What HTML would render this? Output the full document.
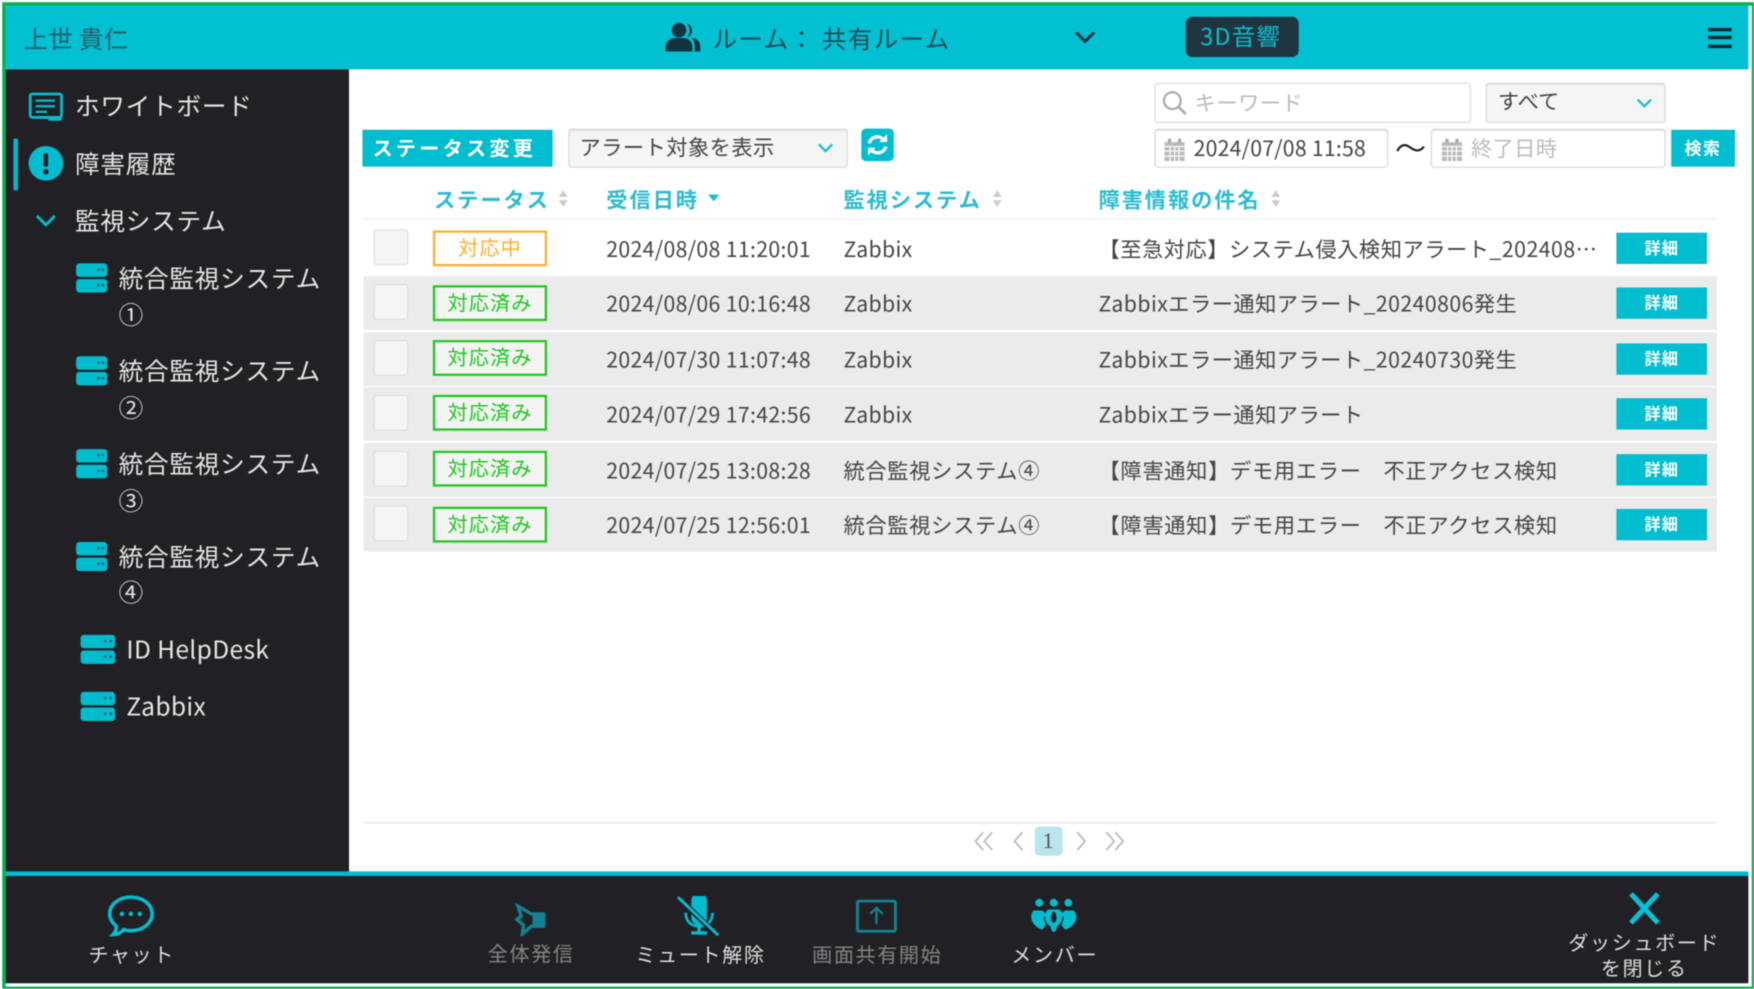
<!DOCTYPE html>
<html lang="ja"><head><meta charset="utf-8"><title>障害履歴</title>
<style>
html,body{margin:0;padding:0;background:#fff;width:1754px;height:989px;overflow:hidden}
#r{position:absolute;left:0;top:0;width:1568px;height:884px;transform:scale(1.11862);transform-origin:0 0;background:#fff;overflow:hidden;filter:blur(.45px);font-family:"Noto Sans CJK JP","Liberation Sans",sans-serif}
#r div,#r svg{position:absolute}
.t{white-space:nowrap;transform:translateY(-50%);line-height:1.2}
.b{background:#f5f5f5;border:1px solid #d8d8d8;border-radius:3px;box-sizing:border-box;box-shadow:inset 0 1px 1px #ddd}
.s{font-size:22px;color:#e6e6e6;letter-spacing:.7px;margin-top:-.6px}
.h{font-size:19px;color:#2bbccf;font-weight:700;letter-spacing:1.7px;margin-top:1px}
.c{font-size:19px;color:#444;letter-spacing:.3px;margin-top:1px}
.g{background:#ebebeb}
.tag{width:102px;height:32px;box-sizing:border-box;border:2px solid #1cc81c;color:#1cc81c;text-align:center;font-size:18px;letter-spacing:1px;line-height:26px;background:#f4f4f4}
.d{left:1445px;width:81px;height:28px;background:#00bdd0;color:#fff;text-align:center;font-size:14.5px;line-height:28px;font-weight:700;letter-spacing:1px}
.cb{left:334px;width:31px;height:32px;background:#f5f5f5;border:1px solid #ddd;border-radius:3px;box-sizing:border-box}
.f{font-size:18px;letter-spacing:1.4px;color:#ddd}
.f2{color:#858585}
</style></head><body><div id="r">
<!-- frame -->
<div style="left:5px;top:5px;width:1558px;height:57px;background:#00c0d2"></div>
<div style="left:5px;top:62px;width:307px;height:718px;background:#212025"></div>
<div style="left:5px;top:779px;width:1558px;height:4px;background:#00bccf"></div>
<div style="left:5px;top:783px;width:1558px;height:96px;background:#212025"></div>
<div style="left:2px;top:1.5px;width:1561px;height:877.5px;border:3.5px solid #00b050;box-sizing:content-box"></div>

<!-- header -->
<div class="t" style="left:21px;top:34px;font-size:22px;color:#24606c;letter-spacing:.2px">上世 貴仁</div>
<svg style="left:594px;top:19px" width="33" height="28" viewBox="0 0 33 28"><g fill="#123440"><circle cx="13" cy="8" r="6.500"/><path d="M20 2a6.500 6.500 0 0 1 0 12.500 9 9 0 0 0 0-12.500z"/><path d="M1 27v-4c0-5 4-8 8-8h8c4 0 8 3 8 8v4z"/><path d="M24 15c5 0 8 3 8 8v4h-5v-5c0-3-1-5-3-7z"/></g></svg>
<div class="t" style="left:637px;top:34px;font-size:22px;color:#1f4c58;letter-spacing:1.1px">ルーム： 共有ルーム</div>
<svg style="left:960px;top:26px" width="20" height="14" viewBox="0 0 20 14"><path d="M2 3l8 8 8-8" fill="none" stroke="#12303a" stroke-width="2.600"/></svg>
<div style="left:1060px;top:15px;width:101px;height:36px;background:#1f3540;border-radius:6px"></div>
<div class="t" style="left:1073px;top:33px;font-size:21px;color:#08bfd0;letter-spacing:1px">3D音響</div>
<div style="left:1527px;top:25px;width:21px;height:3px;background:#12242c"></div>
<div style="left:1527px;top:32px;width:21px;height:3px;background:#12242c"></div>
<div style="left:1527px;top:40px;width:21px;height:3px;background:#12242c"></div>

<!-- sidebar -->
<svg style="left:25px;top:82px" width="32" height="27" viewBox="0 0 32 27"><rect x="2" y="2" width="28" height="21" rx="2" fill="none" stroke="#00bccf" stroke-width="2.500"/><path d="M7 8h17M7 13h17M7 18h10" stroke="#00bccf" stroke-width="2"/><path d="M18 23h12v3H18z" fill="#00bccf"/></svg>
<div class="t s" style="left:67px;top:95px">ホワイトボード</div>
<div style="left:12px;top:124px;width:4px;height:46px;background:#00bccf"></div>
<svg style="left:25px;top:130px" width="32" height="32" viewBox="0 0 32 32"><circle cx="16" cy="16" r="15.500" fill="#00bccf"/><rect x="14" y="7" width="4" height="12" rx="1.500" fill="#212025"/><circle cx="16" cy="23.500" r="2.400" fill="#212025"/></svg>
<div class="t s" style="left:67px;top:147px">障害履歴</div>
<svg style="left:31px;top:190px" width="20" height="14" viewBox="0 0 20 14"><path d="M2 3l8 8 8-8" fill="none" stroke="#00bccf" stroke-width="2.600"/></svg>
<div class="t s" style="left:67px;top:198px">監視システム</div>

<svg style="left:68px;top:235px" width="28" height="27" viewBox="0 0 28 27"><rect width="28" height="12" y="0.500" rx="3" fill="#00bccf"/><rect width="28" height="12" y="14.500" rx="3" fill="#00bccf"/><path d="M19 5h2v2h-2zM23 5h2v2h-2zM19 19h2v2h-2zM23 19h2v2h-2z" fill="#12555f"/></svg>
<div class="t s" style="left:106px;top:249px">統合監視システム</div>
<div class="t s" style="left:106px;top:282px">①</div>
<svg style="left:68px;top:318px" width="28" height="27" viewBox="0 0 28 27"><rect width="28" height="12" y="0.500" rx="3" fill="#00bccf"/><rect width="28" height="12" y="14.500" rx="3" fill="#00bccf"/><path d="M19 5h2v2h-2zM23 5h2v2h-2zM19 19h2v2h-2zM23 19h2v2h-2z" fill="#12555f"/></svg>
<div class="t s" style="left:106px;top:332px">統合監視システム</div>
<div class="t s" style="left:106px;top:365px">②</div>
<svg style="left:68px;top:401px" width="28" height="27" viewBox="0 0 28 27"><rect width="28" height="12" y="0.500" rx="3" fill="#00bccf"/><rect width="28" height="12" y="14.500" rx="3" fill="#00bccf"/><path d="M19 5h2v2h-2zM23 5h2v2h-2zM19 19h2v2h-2zM23 19h2v2h-2z" fill="#12555f"/></svg>
<div class="t s" style="left:106px;top:415px">統合監視システム</div>
<div class="t s" style="left:106px;top:448px">③</div>
<svg style="left:68px;top:484px" width="28" height="27" viewBox="0 0 28 27"><rect width="28" height="12" y="0.500" rx="3" fill="#00bccf"/><rect width="28" height="12" y="14.500" rx="3" fill="#00bccf"/><path d="M19 5h2v2h-2zM23 5h2v2h-2zM19 19h2v2h-2zM23 19h2v2h-2z" fill="#12555f"/></svg>
<div class="t s" style="left:106px;top:498px">統合監視システム</div>
<div class="t s" style="left:106px;top:530px">④</div>
<svg style="left:72px;top:567px" width="31" height="27" viewBox="0 0 31 27"><rect width="31" height="12" y="0.500" rx="3" fill="#00bccf"/><rect width="31" height="12" y="14.500" rx="3" fill="#00bccf"/><path d="M21 5h2v2h-2zM26 5h2v2h-2zM21 19h2v2h-2zM26 19h2v2h-2z" fill="#12555f"/></svg>
<div class="t s" style="left:113px;top:581px;letter-spacing:.3px">ID HelpDesk</div>
<svg style="left:72px;top:618px" width="31" height="27" viewBox="0 0 31 27"><rect width="31" height="12" y="0.500" rx="3" fill="#00bccf"/><rect width="31" height="12" y="14.500" rx="3" fill="#00bccf"/><path d="M21 5h2v2h-2zM26 5h2v2h-2zM21 19h2v2h-2zM26 19h2v2h-2z" fill="#12555f"/></svg>
<div class="t s" style="left:113px;top:632px;letter-spacing:.3px">Zabbix</div>

<!-- toolbar -->
<div style="left:324px;top:116px;width:170px;height:33px;background:#00bdd0"></div>
<div class="t" style="left:333px;top:133px;font-size:18px;font-weight:700;color:#fff;letter-spacing:2.900px">ステータス変更</div>
<div class="b" style="left:508px;top:115px;width:250px;height:35px"></div>
<div class="t" style="left:518px;top:132px;font-size:19px;color:#444;letter-spacing:.400px">アラート対象を表示</div>
<svg style="left:730px;top:127px" width="16" height="11" viewBox="0 0 16 11"><path d="M2 2l6 6 6-6" fill="none" stroke="#1bbccf" stroke-width="2"/></svg>
<div style="left:770px;top:115px;width:29px;height:29px;background:#00bdd0;border-radius:4px"></div>
<svg style="left:773px;top:118px" width="23" height="23" viewBox="0 0 23 23"><path d="M4 10a7.500 7.500 0 0 1 13-3" fill="none" stroke="#fff" stroke-width="3"/><path d="M20 2v7h-7z" fill="#fff"/><path d="M19 13a7.500 7.500 0 0 1-13 3" fill="none" stroke="#fff" stroke-width="3"/><path d="M3 21v-7h7z" fill="#fff"/></svg>

<div class="b" style="left:1032px;top:74px;width:283px;height:36px;background:#fff;box-shadow:none"></div>
<svg style="left:1038px;top:80px" width="24" height="24" viewBox="0 0 24 24"><circle cx="10" cy="10" r="7.500" fill="none" stroke="#aaa" stroke-width="2"/><path d="M15.500 15.500L22 22" stroke="#aaa" stroke-width="2.400"/></svg>
<div class="t" style="left:1068px;top:92px;font-size:19px;color:#bbb;letter-spacing:.400px">キーワード</div>
<div class="b" style="left:1328px;top:74px;width:161px;height:36px"></div>
<div class="t" style="left:1339px;top:91px;font-size:19px;color:#444">すべて</div>
<svg style="left:1462px;top:87px" width="16" height="11" viewBox="0 0 16 11"><path d="M2 2l6 6 6-6" fill="none" stroke="#1bbccf" stroke-width="2"/></svg>

<div class="b" style="left:1032px;top:115px;width:209px;height:35px;background:#fff"></div>
<svg style="left:1040px;top:123px" width="20" height="21" viewBox="0 0 20 21"><path d="M1 4h18v17H1z" fill="#bbb"/><path d="M4 1h3v4H4zM13 1h3v4h-3z" fill="#aaa"/><path d="M1 8h18M1 12h18M1 16.500h18M6 8v13M10 8v13M14 8v13" stroke="#fff" stroke-width="1"/></svg>
<div class="t" style="left:1067px;top:133px;font-size:19px;color:#444;letter-spacing:.2px">2024/07/08 11:58</div>
<svg style="left:1248px;top:126px" width="26" height="14" viewBox="0 0 26 14"><path d="M1 9c4-7 8-6 12-3s8 4 12-1" fill="none" stroke="#222" stroke-width="2"/></svg>
<div class="b" style="left:1279px;top:115px;width:210px;height:35px;background:#fff"></div>
<svg style="left:1288px;top:123px" width="20" height="21" viewBox="0 0 20 21"><path d="M1 4h18v17H1z" fill="#bbb"/><path d="M4 1h3v4H4zM13 1h3v4h-3z" fill="#aaa"/><path d="M1 8h18M1 12h18M1 16.500h18M6 8v13M10 8v13M14 8v13" stroke="#fff" stroke-width="1"/></svg>
<div class="t" style="left:1315px;top:133px;font-size:19px;color:#bbb;letter-spacing:.3px">終了日時</div>
<div style="left:1494px;top:116px;width:57px;height:33px;background:#00bdd0;color:#fff;text-align:center;font-size:15px;line-height:33px;font-weight:700;letter-spacing:1.500px">検索</div>

<!-- table head -->
<div class="t h" style="left:388px;top:178px">ステータス</div>
<svg style="left:498px;top:169px" width="11" height="17" viewBox="0 0 11 17"><path d="M5.500 1l4 6h-8zM5.500 16l4-6h-8z" fill="#ccc"/></svg>
<div class="t h" style="left:542px;top:178px">受信日時</div>
<svg style="left:632px;top:173px" width="12" height="8" viewBox="0 0 12 8"><path d="M1 1h10L6 7z" fill="#1bbccf"/></svg>
<div class="t h" style="left:754px;top:178px">監視システム</div>
<svg style="left:886px;top:169px" width="11" height="17" viewBox="0 0 11 17"><path d="M5.500 1l4 6h-8zM5.500 16l4-6h-8z" fill="#ccc"/></svg>
<div class="t h" style="left:982px;top:178px">障害情報の件名</div>
<svg style="left:1135px;top:169px" width="11" height="17" viewBox="0 0 11 17"><path d="M5.500 1l4 6h-8zM5.500 16l4-6h-8z" fill="#ccc"/></svg>
<div style="left:324px;top:195px;width:1211px;height:1px;background:#eee"></div>

<!-- rows -->
<div class="g" style="left:325px;top:247px;width:1210px;height:48px"></div>
<div class="g" style="left:325px;top:297px;width:1210px;height:48px"></div>
<div class="g" style="left:325px;top:346px;width:1210px;height:48px"></div>
<div class="g" style="left:325px;top:396px;width:1210px;height:48px"></div>
<div class="g" style="left:325px;top:445px;width:1210px;height:48px"></div>

<div class="cb" style="top:205px"></div><div class="tag" style="left:387px;top:206px;border-color:#ffae2b;color:#ffae2b;background:#fff">対応中</div>
<div class="t c" style="left:542px;top:222px">2024/08/08 11:20:01</div><div class="t c" style="left:754px;top:222px">Zabbix</div>
<div class="t c" style="left:982px;top:222px;letter-spacing:.45px">【至急対応】システム侵入検知アラート_202408…</div><div class="d" style="top:208px">詳細</div>

<div class="cb" style="top:254px"></div><div class="tag" style="left:387px;top:255px">対応済み</div>
<div class="t c" style="left:542px;top:271px">2024/08/06 10:16:48</div><div class="t c" style="left:754px;top:271px">Zabbix</div>
<div class="t c" style="left:982px;top:271px;letter-spacing:.4px">Zabbixエラー通知アラート_20240806発生</div><div class="d" style="top:257px">詳細</div>

<div class="cb" style="top:304px"></div><div class="tag" style="left:387px;top:304px">対応済み</div>
<div class="t c" style="left:542px;top:321px">2024/07/30 11:07:48</div><div class="t c" style="left:754px;top:321px">Zabbix</div>
<div class="t c" style="left:982px;top:321px;letter-spacing:.4px">Zabbixエラー通知アラート_20240730発生</div><div class="d" style="top:307px">詳細</div>

<div class="cb" style="top:353px"></div><div class="tag" style="left:387px;top:353px">対応済み</div>
<div class="t c" style="left:542px;top:370px">2024/07/29 17:42:56</div><div class="t c" style="left:754px;top:370px">Zabbix</div>
<div class="t c" style="left:982px;top:370px;letter-spacing:.4px">Zabbixエラー通知アラート</div><div class="d" style="top:356px">詳細</div>

<div class="cb" style="top:403px"></div><div class="tag" style="left:387px;top:403px">対応済み</div>
<div class="t c" style="left:542px;top:420px">2024/07/25 13:08:28</div><div class="t c" style="left:754px;top:420px;letter-spacing:.6px">統合監視システム④</div>
<div class="t c" style="left:982px;top:420px;letter-spacing:.6px">【障害通知】デモ用エラー　不正アクセス検知</div><div class="d" style="top:406px">詳細</div>

<div class="cb" style="top:452px"></div><div class="tag" style="left:387px;top:453px">対応済み</div>
<div class="t c" style="left:542px;top:469px">2024/07/25 12:56:01</div><div class="t c" style="left:754px;top:469px;letter-spacing:.6px">統合監視システム④</div>
<div class="t c" style="left:982px;top:469px;letter-spacing:.6px">【障害通知】デモ用エラー　不正アクセス検知</div><div class="d" style="top:455px">詳細</div>

<!-- pagination -->
<div style="left:324px;top:735px;width:1211px;height:1px;background:#e0e0e0"></div>
<svg style="left:870px;top:742px" width="136" height="20" viewBox="0 0 136 20"><g fill="none" stroke="#bbb" stroke-width="1.600"><path d="M9 2L2 10l7 8M17 2l-7 8 7 8M44 2l-7 8 7 8M93 2l7 8-7 8M119 2l7 8-7 8M127 2l7 8-7 8"/></g></svg>
<div style="left:925px;top:739px;width:25px;height:26px;background:#b9e6ec;border-radius:4px"></div>
<div class="t" style="left:932px;top:752px;font-size:20px;color:#555;font-family:'Liberation Serif',serif">1</div>

<!-- footer -->
<svg style="left:96px;top:800px" width="42" height="38" viewBox="0 0 42 38"><path d="M21 2c10.500 0 19 6.500 19 15s-8.500 15-19 15c-2.500 0-4.500-.3-6.500-1-2 2.500-5.500 4.500-9.500 4.500 2-2 3-4.500 3-7.500C4.500 25 2 21.500 2 17 2 8.500 10.500 2 21 2z" fill="none" stroke="#00bccf" stroke-width="3.200"/><circle cx="13" cy="17" r="2" fill="#00bccf"/><circle cx="21" cy="17" r="2" fill="#00bccf"/><circle cx="29" cy="17" r="2" fill="#00bccf"/></svg>
<div class="t f" style="left:79px;top:854px">チャット</div>

<svg style="left:459px;top:807px" width="30" height="30" viewBox="0 0 30 30"><path d="M4 3l12 7h11v11H16L8 28 9 20 3 15l4-3z" fill="none" stroke="#0f8391" stroke-width="3"/><path d="M17 10h10v11H17z" fill="#0f8391"/></svg>
<div class="t f f2" style="left:436px;top:853px">全体発信</div>

<svg style="left:604px;top:801px" width="42" height="36" viewBox="0 0 42 36"><path d="M14 3a7 7 0 0 1 14 0v15a7 7 0 0 1-14 0z" fill="#00bccf" transform="translate(0 1)"/><path d="M9 15c0 8 5 12 12 12s12-4 12-12" fill="none" stroke="#00bccf" stroke-width="2.400"/><path d="M21 27v5M14 33h14" stroke="#00bccf" stroke-width="3"/><path d="M3 2l34 33" stroke="#212025" stroke-width="5"/><path d="M2 1l36 34" stroke="#00bccf" stroke-width="2.600"/></svg>
<div class="t f" style="left:568px;top:854px">ミュート解除</div>

<svg style="left:765px;top:804px" width="37" height="30" viewBox="0 0 37 30"><rect x="1.500" y="1.500" width="34" height="27" rx="1.500" fill="none" stroke="#0f8391" stroke-width="2.600"/><path d="M18.500 22V8M13 13l5.500-5.500L24 13" fill="none" stroke="#0f8391" stroke-width="2"/></svg>
<div class="t f f2" style="left:726px;top:854px">画面共有開始</div>

<svg style="left:921px;top:803px" width="42" height="30" viewBox="0 0 42 30"><g fill="#00bccf"><circle cx="8" cy="4" r="3.500"/><circle cx="21" cy="4" r="3.500"/><circle cx="34" cy="4" r="3.500"/><path d="M3 11h8l3 3-2 4 2 6-3 4c-9-2-13-12-8-17z"/><path d="M39 11h-8l-3 3 2 4-2 6 3 4c9-2 13-12 8-17z"/><path d="M16 10h10c5 4 3 12-2 15l-1.500 5h-3L18 25c-5-3-7-11-2-15z"/></g><ellipse cx="21" cy="17" rx="2.500" ry="5" fill="#212025"/></svg>
<div class="t f" style="left:904px;top:854px">メンバー</div>

<svg style="left:1456px;top:797px" width="28" height="30" viewBox="0 0 28 30"><path d="M2 2l24 26M26 2L2 28" stroke="#00c3d6" stroke-width="4.500"/></svg>
<div class="t f" style="left:1402px;top:843px">ダッシュボード</div>
<div class="t f" style="left:1431px;top:866px">を閉じる</div>
</div></body></html>
